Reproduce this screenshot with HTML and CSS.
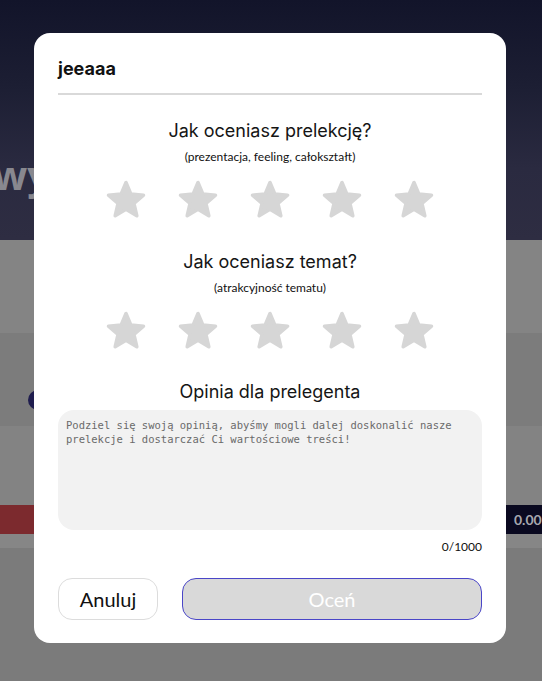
FILE: index.html
```html
<!DOCTYPE html>
<html lang="pl">
<head>
<meta charset="utf-8">
<title>Ocena prelekcji</title>
<link rel="stylesheet" href="styles.css">
</head>
<body>
<div class="page">
  <section class="hero">
    <h1 class="hero-title">wy</h1>
  </section>
  <div class="band band-light"></div>
  <div class="band band-dark"><span class="dot"></span></div>
  <div class="band band-light2"></div>
  <div class="band bar-row"><span class="bar-red"></span><span class="bar-navy">0.00</span></div>
  <div class="band band-thin"></div>
  <div class="rest"></div>
</div>

<div class="modal">
  <h2 class="modal-title">jeeaaa</h2>
  <hr class="divider">

  <div class="question q1">
    <p class="q-title">Jak oceniasz prelekcję?</p>
    <p class="q-sub">(prezentacja, feeling, całokształt)</p>
    <div class="stars">
      <svg class="star" viewBox="0 0 24 24"><path d="M12 17.27L18.18 21l-1.64-7.03L22 9.24l-7.19-.61L12 2 9.19 8.63 2 9.24l5.46 4.73L5.82 21z"/></svg>
      <svg class="star" viewBox="0 0 24 24"><path d="M12 17.27L18.18 21l-1.64-7.03L22 9.24l-7.19-.61L12 2 9.19 8.63 2 9.24l5.46 4.73L5.82 21z"/></svg>
      <svg class="star" viewBox="0 0 24 24"><path d="M12 17.27L18.18 21l-1.64-7.03L22 9.24l-7.19-.61L12 2 9.19 8.63 2 9.24l5.46 4.73L5.82 21z"/></svg>
      <svg class="star" viewBox="0 0 24 24"><path d="M12 17.27L18.18 21l-1.64-7.03L22 9.24l-7.19-.61L12 2 9.19 8.63 2 9.24l5.46 4.73L5.82 21z"/></svg>
      <svg class="star" viewBox="0 0 24 24"><path d="M12 17.27L18.18 21l-1.64-7.03L22 9.24l-7.19-.61L12 2 9.19 8.63 2 9.24l5.46 4.73L5.82 21z"/></svg>
    </div>
  </div>

  <div class="question q2">
    <p class="q-title">Jak oceniasz temat?</p>
    <p class="q-sub">(atrakcyjność tematu)</p>
    <div class="stars">
      <svg class="star" viewBox="0 0 24 24"><path d="M12 17.27L18.18 21l-1.64-7.03L22 9.24l-7.19-.61L12 2 9.19 8.63 2 9.24l5.46 4.73L5.82 21z"/></svg>
      <svg class="star" viewBox="0 0 24 24"><path d="M12 17.27L18.18 21l-1.64-7.03L22 9.24l-7.19-.61L12 2 9.19 8.63 2 9.24l5.46 4.73L5.82 21z"/></svg>
      <svg class="star" viewBox="0 0 24 24"><path d="M12 17.27L18.18 21l-1.64-7.03L22 9.24l-7.19-.61L12 2 9.19 8.63 2 9.24l5.46 4.73L5.82 21z"/></svg>
      <svg class="star" viewBox="0 0 24 24"><path d="M12 17.27L18.18 21l-1.64-7.03L22 9.24l-7.19-.61L12 2 9.19 8.63 2 9.24l5.46 4.73L5.82 21z"/></svg>
      <svg class="star" viewBox="0 0 24 24"><path d="M12 17.27L18.18 21l-1.64-7.03L22 9.24l-7.19-.61L12 2 9.19 8.63 2 9.24l5.46 4.73L5.82 21z"/></svg>
    </div>
  </div>

  <div class="opinion">
    <p class="q-title">Opinia dla prelegenta</p>
    <textarea class="opinion-input" placeholder="Podziel się swoją opinią, abyśmy mogli dalej doskonalić nasze prelekcje i dostarczać Ci wartościowe treści!"></textarea>
    <p class="counter">0/1000</p>
  </div>

  <div class="actions">
    <button class="btn btn-cancel">Anuluj</button>
    <button class="btn btn-submit">Oceń</button>
  </div>
</div>
</body>
</html>
```

FILE: styles.css
```css
* { box-sizing: border-box; }
html, body { margin: 0; padding: 0; }
body {
  width: 542px;
  height: 681px;
  overflow: hidden;
  background: #7b7b7b;
  font-family: "Inter", "Liberation Sans", sans-serif;
}
.page { display: flex; flex-direction: column; height: 681px; }
.hero {
  height: 240px;
  background: linear-gradient(180deg, #12142a 0%, #1c1e33 35%, #2a2a40 70%, #2e2d42 100%);
  display: flex;
  align-items: flex-start;
  overflow: hidden;
}
.hero-title {
  margin: 148px 0 0 -7px;
  font-family: "Open Sans", "Liberation Sans", sans-serif;
  font-weight: 700;
  font-size: 40px;
  line-height: 54px;
  color: #88888f;
}
.band { flex: none; }
.band-light { height: 93px; background: #848484; }
.band-dark { height: 93px; background: #7c7c7c; position: relative; }
.dot {
  position: absolute;
  left: 28px; top: 57px;
  width: 20px; height: 20px;
  border-radius: 50%;
  background: #1f1d4e;
}
.band-light2 { height: 79px; background: #838383; }
.bar-row { height: 29px; display: flex; justify-content: space-between; background: #848484; }
.bar-red { width: 60px; background: #7c2a2e; }
.bar-navy {
  width: 60px;
  background: #0a0920;
  color: #a6a6ae;
  font-family: "Lato", sans-serif;
  font-weight: 700;
  font-size: 14px;
  line-height: 29px;
  padding-left: 32px;
  overflow: hidden;
  white-space: nowrap;
}
.band-thin { height: 14px; background: #868686; }
.rest { flex: 1; background: #7b7b7b; }

.modal {
  position: absolute;
  left: 34px;
  top: 33px;
  width: 472px;
  height: 610px;
  background: #fff;
  border-radius: 16px;
  padding: 25px 24px 23px;
  display: flex;
  flex-direction: column;
}
.modal-title {
  margin: 0;
  font-family: "Inter", "Liberation Sans", sans-serif;
  font-weight: 700;
  font-size: 18px;
  line-height: 22px;
  color: #111;
}
.divider {
  margin: 13px 0 0;
  border: 0;
  height: 2px;
  background: #d9d9d9;
}
.question { display: flex; flex-direction: column; align-items: center; }
.q1 { margin-top: 25px; }
.q2 { margin-top: 30px; }
.q-title {
  margin: 0;
  font-family: "Inter", sans-serif;
  font-weight: 400;
  font-size: 18px;
  line-height: 22px;
  color: #151515;
  text-align: center;
}
.q-sub {
  margin: 7px 0 0;
  font-family: "Lato", sans-serif;
  font-size: 12px;
  line-height: 15px;
  color: #111;
}
.stars {
  margin-top: 15px;
  display: flex;
  gap: 30px;
}
.star { width: 42px; height: 42px; display: block; }
.star path {
  fill: #d6d6d6;
  stroke: #d6d6d6;
  stroke-width: 2;
  stroke-linejoin: round;
}
.opinion { margin-top: 29px; display: flex; flex-direction: column; align-items: center; }
.opinion-input {
  margin-top: 7px;
  width: 100%;
  height: 120px;
  resize: none;
  border: 0;
  border-radius: 16px;
  background: #f2f2f2;
  padding: 8px 8px;
  font-family: "DejaVu Sans Mono", "Liberation Mono", monospace;
  font-size: 10.5px;
  line-height: 14px;
  color: #333;
  outline: none;
}
.opinion-input::placeholder { color: #6a6a6a; }
.counter {
  margin: 9px 0 0;
  align-self: flex-end;
  font-family: "Lato", sans-serif;
  font-size: 12px;
  line-height: 15px;
  color: #111;
}
.actions {
  margin-top: auto;
  display: flex;
  gap: 24px;
}
.btn {
  height: 42px;
  border-radius: 14px;
  font-family: "Lato", sans-serif;
  font-size: 20px;
  padding: 0;
}
.btn-cancel {
  width: 100px;
  background: #fff;
  border: 1px solid #dcdcdc;
  color: #111;
}
.btn-submit {
  flex: 1;
  background: #d9d9d9;
  border: 1px solid #4a46c8;
  color: #fff;
}
```
